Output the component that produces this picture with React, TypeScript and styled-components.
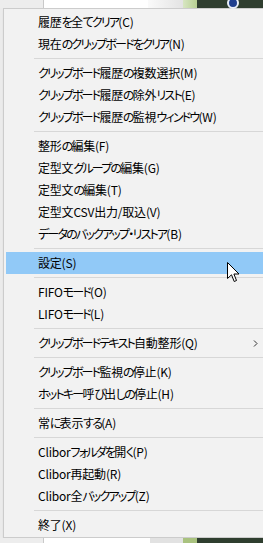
import * as React from "react";
import styled, { createGlobalStyle } from "styled-components";

const GlobalStyle = createGlobalStyle`
  html, body {
    margin: 0;
    padding: 0;
    background: #2f3e2f;
  }
`;

type Entry = { label: string; highlighted?: boolean; submenu?: boolean } | "sep";

const entries: Entry[] = [
  { label: "履歴を全てクリア(C)" },
  { label: "現在のクリップボードをクリア(N)" },
  "sep",
  { label: "クリップボード履歴の複数選択(M)" },
  { label: "クリップボード履歴の除外リスト(E)" },
  { label: "クリップボード履歴の監視ウィンドウ(W)" },
  "sep",
  { label: "整形の編集(F)" },
  { label: "定型文グループの編集(G)" },
  { label: "定型文の編集(T)" },
  { label: "定型文CSV出力/取込(V)" },
  { label: "データのバックアップ・リストア(B)" },
  "sep",
  { label: "設定(S)", highlighted: true },
  "sep",
  { label: "FIFOモード(O)" },
  { label: "LIFOモード(L)" },
  "sep",
  { label: "クリップボードテキスト自動整形(Q)", submenu: true },
  "sep",
  { label: "クリップボード監視の停止(K)" },
  { label: "ホットキー呼び出しの停止(H)" },
  "sep",
  { label: "常に表示する(A)" },
  "sep",
  { label: "Cliborフォルダを開く(P)" },
  { label: "Clibor再起動(R)" },
  { label: "Clibor全バックアップ(Z)" },
  "sep",
  { label: "終了(X)" },
];

const Screen = styled.div`
  position: relative;
  width: 263px;
  height: 543px;
  overflow: hidden;
  display: flex;
  flex-direction: column;
  background: #f0f0f0;
`;

const Strip = styled.div<{ $height: number }>`
  display: flex;
  height: ${(p) => p.$height}px;
  flex-shrink: 0;
`;

const Seg = styled.div<{ $width?: number; $bg: string }>`
  width: ${(p) => (p.$width ? `${p.$width}px` : "auto")};
  flex: ${(p) => (p.$width ? "0 0 auto" : "1")};
  background: ${(p) => p.$bg};
  position: relative;
`;

const Middle = styled.div`
  display: flex;
  flex: 1;
  min-height: 0;
`;

const Gutter = styled.div`
  width: 3px;
  flex-shrink: 0;
  background: #ebebeb;
`;

const Menu = styled.div`
  width: 275px;
  flex-shrink: 0;
  box-sizing: border-box;
  background: #f2f2f2;
  border: 1px solid #cccccc;
  border-right: none;
  padding: 2px 0 1px 0;
  box-shadow: 2px 2px 3px rgba(0, 0, 0, 0.3);
  font-family: "Noto Sans CJK JP", "Noto Sans", sans-serif;
  font-size: 12px;
  font-feature-settings: "palt";
  color: #000;
`;

const Item = styled.div<{ $highlighted?: boolean }>`
  height: 22px;
  margin: 0 2px;
  padding: 0 18px 0 32px;
  display: flex;
  align-items: center;
  white-space: nowrap;
  background: ${(p) => (p.$highlighted ? "#91c9f7" : "transparent")};
`;

const Label = styled.span`
  flex: 1;
  line-height: 22px;
  letter-spacing: -0.2px;
`;

// Meiryo UI kana are narrower than Noto's, so kana runs get tightened
const Kana = styled.span`
  letter-spacing: -1.8px;
`;

const Separator = styled.div`
  height: 7px;
  margin-left: 30px;
  display: flex;
  align-items: center;
  &::after {
    content: "";
    flex: 1;
    height: 1px;
    background: #d7d7d7;
  }
`;

const Cursor = styled.svg`
  position: absolute;
  left: 227px;
  top: 262px;
`;

const TrayIcon = styled.div`
  position: absolute;
  left: 30px;
  top: -3px;
  width: 12px;
  height: 12px;
  border-radius: 50%;
  background: #1f3f8f;
  border: 2px solid #e8eef8;
  box-sizing: border-box;
`;

const Chevron = () => (
  <svg width="5" height="7" viewBox="0 0 5 7">
    <path d="M1 0.5 L4 3.5 L1 6.5" fill="none" stroke="#333" strokeWidth="1" />
  </svg>
);

const kanaRe = /([\u3040-\u30ff・ー]+)/;

const renderLabel = (text: string) =>
  text.split(kanaRe).map((part, i) =>
    kanaRe.test(part) ? <Kana key={i}>{part}</Kana> : part
  );

export default function App() {
  return (
    <>
      <GlobalStyle />
      <Screen>
        <Strip $height={8}>
          <Seg $width={43} $bg="#ededed" />
          <Seg $width={1} $bg="#c9c9c9" />
          <Seg $width={104} $bg="#ffffff" />
          <Seg $width={35} $bg="linear-gradient(90deg, #fafafa, #e3e3e3)" />
          <Seg $width={14} $bg="linear-gradient(90deg, #d7e6c2, #b7cf92)" />
          <Seg $bg="#2f3e2f">
            <TrayIcon />
          </Seg>
        </Strip>
        <Middle>
          <Gutter />
          <Menu>
            {entries.map((e, i) =>
              e === "sep" ? (
                <Separator key={i} />
              ) : (
                <Item key={i} $highlighted={e.highlighted}>
                  <Label>{renderLabel(e.label)}</Label>
                  {e.submenu ? <Chevron /> : undefined}
                </Item>
              )
            )}
          </Menu>
        </Middle>
        <Strip $height={5}>
          <Seg $width={43} $bg="#ededed" />
          <Seg $width={1} $bg="#c9c9c9" />
          <Seg $width={106} $bg="#ffffff" />
          <Seg $width={33} $bg="#e2e2e2" />
          <Seg $width={14} $bg="#a9c27f" />
          <Seg $bg="#2f3e2f" />
        </Strip>
        <Cursor width="13" height="21" viewBox="0 0 13 21">
          <path
            d="M0.5 0.5 L0.5 16.5 L4.5 12.8 L7.2 19.5 L9.5 18.5 L6.9 12 L12 12 Z"
            fill="#ffffff"
            stroke="#000000"
            strokeWidth="1"
            strokeLinejoin="miter"
          />
        </Cursor>
      </Screen>
    </>
  );
}
